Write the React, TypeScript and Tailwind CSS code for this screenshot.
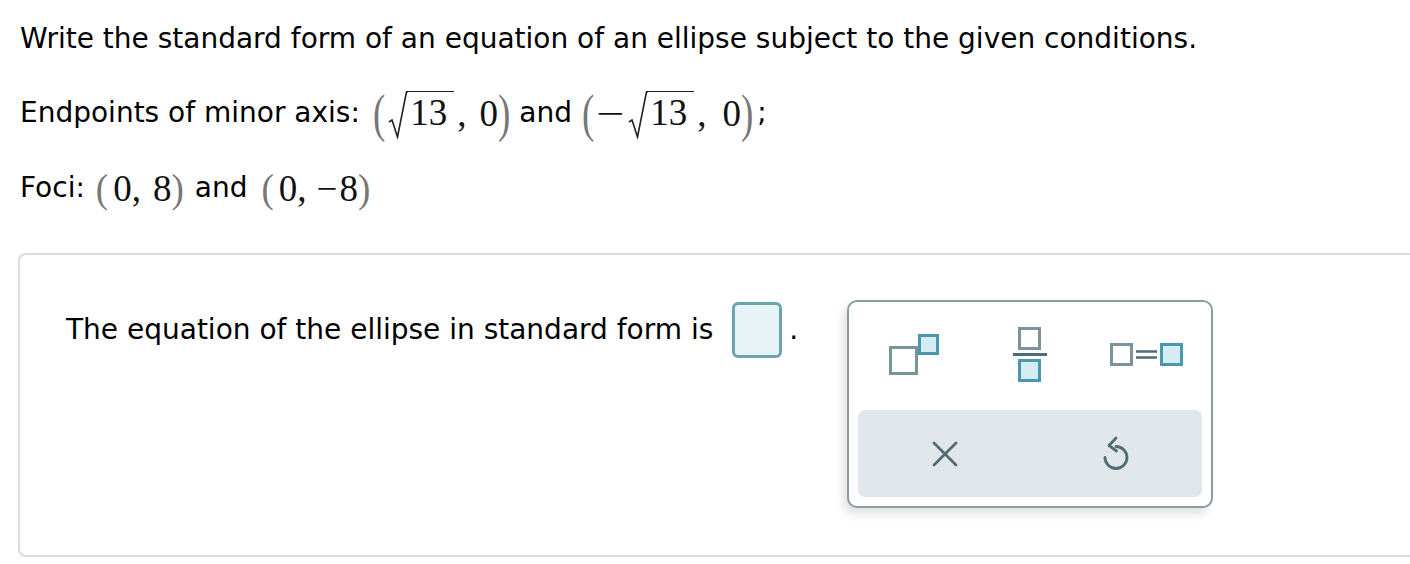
import React from "react";

const serif = { fontFamily: '"Liberation Serif", "Times New Roman", serif' };

function Paren({ ch, big }: { ch: string; big?: boolean }) {
  return (
    <span
      className={
        big
          ? "text-[37px] text-[#777] leading-none inline-block scale-y-[1.4]"
          : "text-[37px] text-[#777] leading-none inline-block scale-y-[1.08]"
      }
      style={serif}
    >
      {ch}
    </span>
  );
}

function Sqrt13() {
  return (
    <span className="inline-flex items-start h-[48px] mt-[4px]">
      <svg width="20" height="48" viewBox="0 0 20 48" className="-mr-[1px]">
        <path d="M1 31 L4 29 L9.5 46 L18.5 0.8 L20 0.8" fill="none" stroke="#222" strokeWidth="1.6" />
      </svg>
      <span className="border-t-[1.6px] border-[#222] leading-none pt-[2px] pl-[3px] pr-[7px] text-[37px]" style={serif}>
        13
      </span>
    </span>
  );
}

function M({ children }: { children: React.ReactNode }) {
  return (
    <span className="inline-flex items-center text-[37px] text-[#111] leading-none" style={serif}>
      {children}
    </span>
  );
}

export default function App() {
  return (
    <div
      className="w-[1410px] h-[564px] bg-white text-black overflow-hidden"
      style={{ fontFamily: '"DejaVu Sans", Verdana, sans-serif' }}
    >
      <div className="pl-[20px] pt-[19px] text-[28px] leading-[40px]">
        <div>Write the standard form of an equation of an ellipse subject to the given conditions.</div>
        <div className="mt-[26px] flex items-center h-[56px]">
          <span>Endpoints of minor axis:</span>
          <M>
            <span className="ml-[13px]" />
            <Paren ch="(" big />
            <span className="ml-[3px]" />
            <Sqrt13 />
            <span className="ml-[3px]">,</span>
            <span className="ml-[13px]">0</span>
            <Paren ch=")" big />
          </M>
          <span className="ml-[9px]">and</span>
          <M>
            <span className="ml-[10px]" />
            <Paren ch="(" big />
            <span className="ml-[6px] mr-[7px] inline-block scale-x-[1.35]">−</span>
            <Sqrt13 />
            <span className="ml-[3px]">,</span>
            <span className="ml-[16px]">0</span>
            <Paren ch=")" big />
          </M>
          <span className="ml-[4px]">;</span>
        </div>
        <div className="mt-[19px] flex items-center h-[56px]">
          <span>Foci:</span>
          <M>
            <span className="ml-[11px]" />
            <Paren ch="(" />
            <span className="ml-[5px]">0,</span>
            <span className="ml-[12px]">8</span>
            <Paren ch=")" />
          </M>
          <span className="ml-[11px]">and</span>
          <M>
            <span className="ml-[14px]" />
            <Paren ch="(" />
            <span className="ml-[5px]">0,</span>
            <span className="ml-[10px]">−</span>
            <span className="ml-[2px]">8</span>
            <Paren ch=")" />
          </M>
        </div>
      </div>

      <div className="ml-[18px] mt-[37px] h-[304px] border-2 border-r-0 border-[#d6dce1] rounded-l-[8px] flex pt-[47px] pl-[46px]">
        <div className="flex items-start">
          <div className="flex items-center h-[56px] text-[28px]">
            <span>The equation of the ellipse in standard form is</span>
            <span className="ml-[19px] w-[50px] h-[56px] border-[3px] border-[#6aa4b3] bg-[#e7f3f6] rounded-[6px]" />
            <span className="ml-[7px]">.</span>
          </div>
          <div className="ml-[49px] -mt-[2px] w-[366px] h-[208px] border-2 border-[#8c9ca6] rounded-[10px] bg-white shadow-[-4px_6px_10px_rgba(0,0,0,0.12)] px-[9px] pt-[8px] pb-[9px] flex flex-col">
            <div className="h-[100px] pb-[10px] grid grid-cols-3 items-center justify-items-center">
              {/* exponent */}
              <svg width="52" height="42" viewBox="0 0 52 42" className="-ml-[4px]">
                <rect x="2.5" y="13.5" width="26" height="26" fill="white" stroke="#7b939b" strokeWidth="3" />
                <rect x="31.5" y="1.5" width="18" height="18" fill="#d5ecf2" stroke="#4a98b0" strokeWidth="3" />
              </svg>
              {/* fraction */}
              <svg width="36" height="56" viewBox="0 0 36 56">
                <rect x="7.5" y="1.5" width="20" height="20" fill="white" stroke="#7b939b" strokeWidth="3" />
                <line x1="1" y1="27.5" x2="35" y2="27.5" stroke="#4f6c75" strokeWidth="3" />
                <rect x="7.5" y="33.5" width="20" height="20" fill="#d5ecf2" stroke="#4a98b0" strokeWidth="3" />
              </svg>
              {/* equals */}
              <svg width="74" height="24" viewBox="0 0 74 24" className="ml-[4px]">
                <rect x="1.5" y="1.5" width="20" height="20" fill="white" stroke="#7b939b" strokeWidth="3" />
                <line x1="26" y1="8.5" x2="47" y2="8.5" stroke="#4f6c75" strokeWidth="2.5" />
                <line x1="26" y1="14.5" x2="47" y2="14.5" stroke="#4f6c75" strokeWidth="2.5" />
                <rect x="51.5" y="1.5" width="20" height="20" fill="#d5ecf2" stroke="#4a98b0" strokeWidth="3" />
              </svg>
            </div>
            <div className="flex-1 bg-[#e1e6ea] rounded-[7px] grid grid-cols-2 items-center justify-items-center">
              <svg width="26" height="26" viewBox="0 0 26 26" className="ml-[2px]">
                <path d="M2 2 L24 24 M24 2 L2 24" stroke="#4f6c75" strokeWidth="2.8" strokeLinecap="round" />
              </svg>
              <svg width="30" height="36" viewBox="0 0 30 36" className="-mt-[2px]">
                <path d="M15 11.5 A11 11 0 1 1 4 22.5" fill="none" stroke="#4f6c75" strokeWidth="2.8" strokeLinecap="round" />
                <path d="M15 3 L8 10.5 L15.5 16" fill="none" stroke="#4f6c75" strokeWidth="2.8" strokeLinecap="round" strokeLinejoin="round" />
              </svg>
            </div>
          </div>
        </div>
      </div>
    </div>
  );
}
